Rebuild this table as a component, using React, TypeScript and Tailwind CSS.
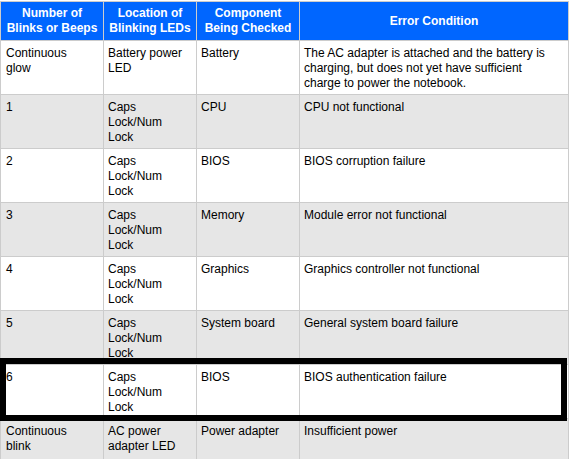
import React from "react";

type Row = { a: React.ReactNode; b: React.ReactNode; c: React.ReactNode; d: React.ReactNode };

const capsLock = (
  <>
    Caps
    <br />
    Lock/Num
    <br />
    Lock
  </>
);

const rows: Row[] = [
  {
    a: (
      <>
        Continuous
        <br />
        glow
      </>
    ),
    b: (
      <>
        Battery power
        <br />
        LED
      </>
    ),
    c: "Battery",
    d: (
      <>
        The AC adapter is attached and the battery is
        <br />
        charging, but does not yet have sufficient
        <br />
        charge to power the notebook.
      </>
    ),
  },
  { a: "1", b: capsLock, c: "CPU", d: "CPU not functional" },
  { a: "2", b: capsLock, c: "BIOS", d: "BIOS corruption failure" },
  { a: "3", b: capsLock, c: "Memory", d: "Module error not functional" },
  { a: "4", b: capsLock, c: "Graphics", d: "Graphics controller not functional" },
  { a: "5", b: capsLock, c: "System board", d: "General system board failure" },
  { a: "6", b: capsLock, c: "BIOS", d: "BIOS authentication failure" },
  {
    a: (
      <>
        Continuous
        <br />
        blink
      </>
    ),
    b: (
      <>
        AC power
        <br />
        adapter LED
      </>
    ),
    c: "Power adapter",
    d: "Insufficient power",
  },
];

export default function App() {
  return (
    <div
      className="relative w-[571px] h-[459px] overflow-hidden bg-white text-black"
      style={{ fontFamily: '"Liberation Sans", Arial, sans-serif' }}
    >
      <div className="mt-px grid w-[569px] grid-cols-[102px_92px_102px_268px] grid-rows-[38px] auto-rows-[53px] gap-px border border-[#cccccc] bg-[#cccccc] text-[12px] leading-[15px]">
        <div className="flex items-center justify-center bg-[#0066ff] text-center font-bold text-white">
          Number of
          <br />
          Blinks or Beeps
        </div>
        <div className="flex items-center justify-center bg-[#0066ff] text-center font-bold text-white">
          Location of
          <br />
          Blinking LEDs
        </div>
        <div className="flex items-center justify-center bg-[#0066ff] text-center font-bold text-white">
          Component
          <br />
          Being Checked
        </div>
        <div className="flex items-center justify-center bg-[#0066ff] text-center font-bold text-white">
          Error Condition
        </div>
        {rows.map((r, i) => {
          const bg = i % 2 === 0 ? "bg-white" : "bg-[#e6e6e6]";
          return (
            <React.Fragment key={i}>
              <div className={`${bg} pl-[5px] pt-[5px]`}>{r.a}</div>
              <div className={`${bg} pl-[4px] pt-[5px]`}>{r.b}</div>
              <div className={`${bg} pl-[4px] pt-[5px]`}>{r.c}</div>
              <div className={`${bg} pl-[4px] pt-[5px]`}>{r.d}</div>
            </React.Fragment>
          );
        })}
      </div>
      <div className="pointer-events-none absolute left-0 top-[358px] h-[63px] w-[567px] border-[6px] border-black" />
    </div>
  );
}
